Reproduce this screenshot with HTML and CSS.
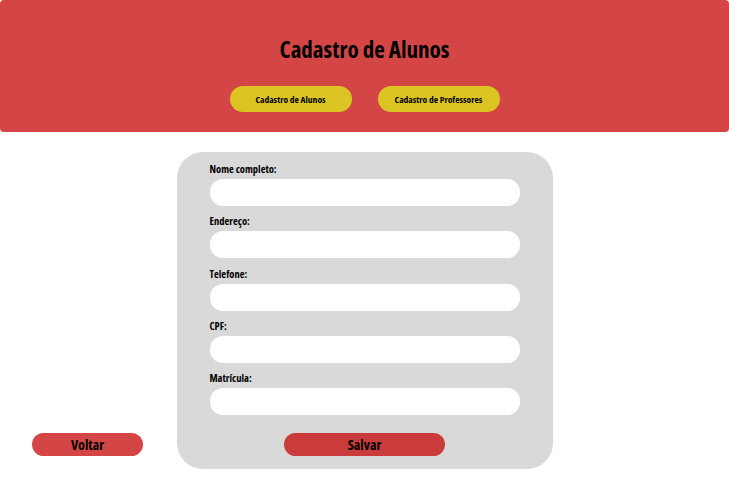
FILE: index.html
```html
<!DOCTYPE html>
<html lang="pt-BR">
<head>
<meta charset="utf-8">
<title>Cadastro de Alunos</title>
<link rel="stylesheet" href="styles.css">
</head>
<body>
<header class="topo">
  <h1 class="titulo">Cadastro de Alunos</h1>
  <nav class="menu">
    <a class="menu-btn" href="#">Cadastro de Alunos</a>
    <a class="menu-btn" href="#">Cadastro de Professores</a>
  </nav>
</header>
<main class="conteudo">
  <div class="lado">
    <button class="btn-voltar" type="button">Voltar</button>
  </div>
  <form class="cartao">
    <div class="campo">
      <label class="rotulo">Nome completo:</label>
      <input class="entrada" type="text">
    </div>
    <div class="campo">
      <label class="rotulo">Endereço:</label>
      <input class="entrada" type="text">
    </div>
    <div class="campo">
      <label class="rotulo">Telefone:</label>
      <input class="entrada" type="text">
    </div>
    <div class="campo">
      <label class="rotulo">CPF:</label>
      <input class="entrada" type="text">
    </div>
    <div class="campo">
      <label class="rotulo">Matrícula:</label>
      <input class="entrada" type="text">
    </div>
    <div class="acoes">
      <button class="btn-salvar" type="button">Salvar</button>
    </div>
  </form>
  <div class="lado"></div>
</main>
</body>
</html>
```

FILE: styles.css
```css
* { box-sizing: border-box; }
html, body { margin: 0; padding: 0; background: #ffffff; }
body {
  font-family: "Open Sans", "DejaVu Sans Condensed", sans-serif;
  font-stretch: 75%;
  font-weight: bold;
  color: #000;
}
.topo {
  background: #d44646;
  border-radius: 4px;
  height: 132px;
  padding-top: 36px;
  display: flex;
  flex-direction: column;
  align-items: center;
}
.titulo {
  margin: 0;
  font-size: 23px;
  line-height: 27px;
  height: 27px;
  font-weight: bold;
}
.menu {
  margin-top: 23px;
  display: flex;
  gap: 26px;
}
.menu-btn {
  width: 122px;
  height: 26px;
  border-radius: 13px;
  background: #dcc523;
  color: #000;
  text-decoration: none;
  font-size: 9.5px;
  display: flex;
  align-items: center;
  justify-content: center;
}
.conteudo {
  display: grid;
  grid-template-columns: 1fr 376px 1fr;
  margin-top: 20px;
}
.lado {
  display: flex;
  align-items: flex-end;
  padding-left: 32px;
  padding-bottom: 13px;
}
.btn-voltar {
  width: 111px;
  height: 23px;
  border: none;
  border-radius: 12px;
  background: #d44646;
  font-family: inherit;
  font-stretch: 75%;
  font-weight: bold;
  font-size: 14px;
  color: #000;
  padding: 0;
}
.cartao {
  background: #d9d9d9;
  border-radius: 26px;
  padding: 11px 33px 13px;
  display: flex;
  flex-direction: column;
  gap: 9.25px;
}
.campo {
  display: flex;
  flex-direction: column;
  gap: 4px;
}
.rotulo {
  font-size: 10.5px;
  line-height: 12px;
  height: 12px;
}
.entrada {
  display: block;
  width: 310px;
  height: 27px;
  border: none;
  border-radius: 13px;
  background: #fff;
  outline: none;
  margin: 0;
  padding: 0 12px;
}
.acoes {
  display: flex;
  justify-content: center;
  margin-top: 9px;
}
.btn-salvar {
  width: 161px;
  height: 23px;
  border: none;
  border-radius: 12px;
  background: #ca3c3c;
  font-family: inherit;
  font-stretch: 75%;
  font-weight: bold;
  font-size: 14px;
  color: #000;
  padding: 0;
}
```
